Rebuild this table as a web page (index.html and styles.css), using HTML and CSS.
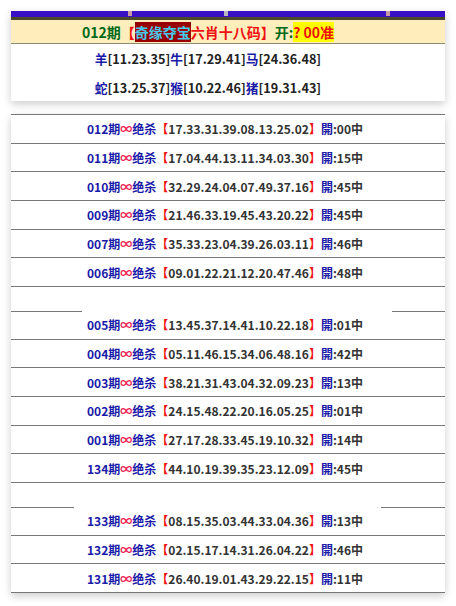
FILE: index.html
```html
<!DOCTYPE html>
<html lang="zh">
<head>
<meta charset="utf-8">
<link rel="stylesheet" href="styles.css">
</head>
<body>
<div class="wrap">
  <div class="card top-card">
    <div class="bar">
      <span class="dot dot-a"></span>
      <span class="dot dot-b"></span>
      <span class="dot dot-c"></span>
    </div>
    <div class="olive"></div>
    <div class="head"><span class="g">012期</span><span class="r">【</span><span class="tag">奇缘夺宝</span><span class="r">六肖十八码】</span><span class="g">开:</span><span class="yel">? 00准</span></div>
    <div class="zrow"><span class="b">羊</span>[11.23.35]<span class="b">牛</span>[17.29.41]<span class="b">马</span>[24.36.48]</div>
    <div class="zrow"><span class="b">蛇</span>[13.25.37]<span class="b">猴</span>[10.22.46]<span class="b">猪</span>[19.31.43]</div>
  </div>

  <div class="card list">
    <div class="row"><span class="b">012期</span><span class="inf">∞</span><span class="b">绝杀</span><span class="r">【</span>17.33.31.39.08.13.25.02<span class="r">】</span><span class="b">開</span>:00中</div>
    <div class="row"><span class="b">011期</span><span class="inf">∞</span><span class="b">绝杀</span><span class="r">【</span>17.04.44.13.11.34.03.30<span class="r">】</span><span class="b">開</span>:15中</div>
    <div class="row"><span class="b">010期</span><span class="inf">∞</span><span class="b">绝杀</span><span class="r">【</span>32.29.24.04.07.49.37.16<span class="r">】</span><span class="b">開</span>:45中</div>
    <div class="row"><span class="b">009期</span><span class="inf">∞</span><span class="b">绝杀</span><span class="r">【</span>21.46.33.19.45.43.20.22<span class="r">】</span><span class="b">開</span>:45中</div>
    <div class="row"><span class="b">007期</span><span class="inf">∞</span><span class="b">绝杀</span><span class="r">【</span>35.33.23.04.39.26.03.11<span class="r">】</span><span class="b">開</span>:46中</div>
    <div class="row"><span class="b">006期</span><span class="inf">∞</span><span class="b">绝杀</span><span class="r">【</span>09.01.22.21.12.20.47.46<span class="r">】</span><span class="b">開</span>:48中</div>
    <div class="gap gap-1"><span class="ln ln-l"></span><span class="ln ln-r"></span></div>
    <div class="row"><span class="b">005期</span><span class="inf">∞</span><span class="b">绝杀</span><span class="r">【</span>13.45.37.14.41.10.22.18<span class="r">】</span><span class="b">開</span>:01中</div>
    <div class="row"><span class="b">004期</span><span class="inf">∞</span><span class="b">绝杀</span><span class="r">【</span>05.11.46.15.34.06.48.16<span class="r">】</span><span class="b">開</span>:42中</div>
    <div class="row"><span class="b">003期</span><span class="inf">∞</span><span class="b">绝杀</span><span class="r">【</span>38.21.31.43.04.32.09.23<span class="r">】</span><span class="b">開</span>:13中</div>
    <div class="row"><span class="b">002期</span><span class="inf">∞</span><span class="b">绝杀</span><span class="r">【</span>24.15.48.22.20.16.05.25<span class="r">】</span><span class="b">開</span>:01中</div>
    <div class="row"><span class="b">001期</span><span class="inf">∞</span><span class="b">绝杀</span><span class="r">【</span>27.17.28.33.45.19.10.32<span class="r">】</span><span class="b">開</span>:14中</div>
    <div class="row"><span class="b">134期</span><span class="inf">∞</span><span class="b">绝杀</span><span class="r">【</span>44.10.19.39.35.23.12.09<span class="r">】</span><span class="b">開</span>:45中</div>
    <div class="gap gap-2"><span class="ln ln-l"></span><span class="ln ln-r"></span></div>
    <div class="row"><span class="b">133期</span><span class="inf">∞</span><span class="b">绝杀</span><span class="r">【</span>08.15.35.03.44.33.04.36<span class="r">】</span><span class="b">開</span>:13中</div>
    <div class="row"><span class="b">132期</span><span class="inf">∞</span><span class="b">绝杀</span><span class="r">【</span>02.15.17.14.31.26.04.22<span class="r">】</span><span class="b">開</span>:46中</div>
    <div class="row"><span class="b">131期</span><span class="inf">∞</span><span class="b">绝杀</span><span class="r">【</span>26.40.19.01.43.29.22.15<span class="r">】</span><span class="b">開</span>:11中</div>
  </div>
</div>
</body>
</html>
```

FILE: styles.css
```css
html, body {
  margin: 0;
  padding: 0;
  background: #ffffff;
}
body {
  font-family: "Noto Sans CJK SC", "Noto Sans", sans-serif;
  font-weight: bold;
  color: #333333;
}
.wrap {
  width: 434px;
  margin: 11px 0 0 11px;
}
.card {
  background: #ffffff;
  box-shadow: 0 3px 8px rgba(0, 0, 0, 0.2);
}
.bar {
  position: relative;
  height: 6px;
  background: #3a10c4;
}
.dot {
  position: absolute;
  top: 0;
  width: 4px;
  height: 5px;
}
.dot-a { left: 117px; background: #c89aa8; }
.dot-b { left: 213px; background: #b8b8c0; }
.dot-c { left: 375px; background: #c89aa8; }
.olive {
  height: 3px;
  background: #4a4a2a;
}
.head {
  height: 23px;
  background: #ffeebb;
  border-bottom: 1px solid #8a8a70;
  display: flex;
  align-items: center;
  justify-content: center;
  padding-right: 40px;
  font-size: 14px;
  line-height: 20px;
}
.g { color: #006a1a; }
.r { color: #ee1111; }
.tag {
  color: #44ccee;
  background: #990000;
}
.yel {
  color: #ee1111;
  background: #ffff00;
}
.zrow {
  height: 29px;
  display: flex;
  align-items: center;
  justify-content: center;
  padding-right: 40px;
  font-size: 12.7px;
  color: #222222;
}
.zrow:last-child { height: 28px; }
.b { color: #1a1aa8; }
.inf { color: #ee2255; }
.list {
  margin-top: 13px;
  border-top: 1px solid #777777;
  margin-bottom: 12px;
}
.row {
  height: 27.67px;
  border-bottom: 1px solid #777777;
  display: flex;
  align-items: center;
  justify-content: center;
  padding-right: 6px;
  font-size: 12px;
  white-space: nowrap;
}
.gap {
  height: 25px;
  display: flex;
  align-items: flex-end;
  justify-content: space-between;
}
.ln {
  height: 1px;
  background: #777777;
}
.gap-1 .ln-l { width: 71px; }
.gap-1 .ln-r { width: 53px; }
.gap-2 .ln-l { width: 63px; }
.gap-2 .ln-r { width: 64px; }
.gap + .row { margin-top: -1px; }
```
